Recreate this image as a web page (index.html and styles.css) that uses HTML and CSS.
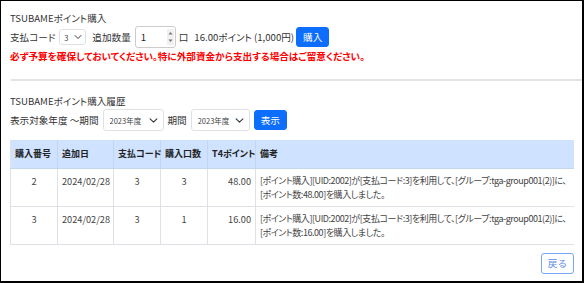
FILE: index.html
```html
<!DOCTYPE html>
<html lang="ja">
<head>
    <meta charset="UTF-8">
    <meta name="viewport" content="width=device-width, initial-scale=1.0">
    <title>TSUBAMEポイント購入</title>
    <link rel="stylesheet" href="styles.css">
</head>
<body>
    <div class="frame">
        <section class="purchase">
            <h2 class="section-title">TSUBAMEポイント購入</h2>
            <form class="form-row" id="buyForm">
                <label class="label">支払コード</label>
                <select class="select select-sm">
                    <option>3</option>
                </select>
                <label class="label label-gap">追加数量</label>
                <span class="number">
                    <input type="text" value="1">
                    <span class="spin">
                        <svg width="7" height="16" viewBox="0 0 7 16">
                            <path d="M1.5 5.5 L3.5 3 L5.5 5.5" fill="#777"/>
                            <path d="M1.5 10.5 L3.5 13 L5.5 10.5" fill="#777"/>
                        </svg>
                    </span>
                </span>
                <span class="unit">口</span>
                <span class="total">16.00ポイント (1,000円)</span>
                <button type="submit" class="btn btn-primary">購入</button>
            </form>
            <p class="note">必ず予算を確保しておいてください。特に外部資金から支出する場合はご留意ください。</p>
        </section>

        <hr class="divider">

        <section class="history">
            <h2 class="section-title">TSUBAMEポイント購入履歴</h2>
            <div class="form-row">
                <label class="label">表示対象年度 ～期間</label>
                <select class="select select-year">
                    <option>2023年度</option>
                </select>
                <label class="label">期間</label>
                <select class="select select-year2">
                    <option>2023年度</option>
                </select>
                <button type="button" class="btn btn-primary">表示</button>
            </div>

            <table class="history-table">
                <colgroup>
                    <col class="c-no">
                    <col class="c-date">
                    <col class="c-code">
                    <col class="c-qty">
                    <col class="c-pt">
                    <col>
                </colgroup>
                <thead>
                    <tr>
                        <th>購入番号</th>
                        <th>追加日</th>
                        <th>支払コード</th>
                        <th>購入口数</th>
                        <th>T4ポイント</th>
                        <th>備考</th>
                    </tr>
                </thead>
                <tbody>
                    <tr>
                        <td class="center">2</td>
                        <td>2024/02/28</td>
                        <td class="center">3</td>
                        <td class="center">3</td>
                        <td class="right">48.00</td>
                        <td class="remark">[ポイント購入][UID:2002]が[支払コード:3]を利用して、[グループ:tga-group001(2)]に、[ポイント数:48.00]を購入しました。</td>
                    </tr>
                    <tr>
                        <td class="center">3</td>
                        <td>2024/02/28</td>
                        <td class="center">3</td>
                        <td class="center">1</td>
                        <td class="right">16.00</td>
                        <td class="remark">[ポイント購入][UID:2002]が[支払コード:3]を利用して、[グループ:tga-group001(2)]に、[ポイント数:16.00]を購入しました。</td>
                    </tr>
                </tbody>
            </table>
        </section>

        <div class="actions">
            <button type="button" class="btn btn-outline">戻る</button>
        </div>
    </div>
</body>
</html>
```

FILE: styles.css
```css
* {
    margin: 0;
    padding: 0;
    box-sizing: border-box;
}
body {
    font-family: "Noto Sans CJK JP", "Noto Sans", sans-serif;
    font-feature-settings: "palt";
    font-size: 9.6px;
    color: #333;
    background: #fff;
}
.frame {
    width: 584px;
    height: 283px;
    border: 1px solid #000;
    border-right-width: 2px;
    border-bottom-width: 2px;
    padding: 10px 8px 0 9px;
    overflow: hidden;
}
.section-title {
    font-size: 9.6px;
    font-weight: normal;
    line-height: 14px;
}
.form-row {
    display: flex;
    align-items: center;
    height: 24px;
}
.label {
    margin-right: 4px;
}
.label-gap {
    margin-left: 6px;
}
.select {
    appearance: none;
    font-family: inherit;
    font-size: 7.5px;
    color: #444;
    background: #fff url("data:image/svg+xml,%3csvg xmlns='http://www.w3.org/2000/svg' viewBox='0 0 16 16'%3e%3cpath fill='none' stroke='%23343a40' stroke-linecap='round' stroke-linejoin='round' stroke-width='2' d='m2 5 6 6 6-6'/%3e%3c/svg%3e") no-repeat right 5px center / 9px 9px;
    border: 1px solid #dee2e6;
    border-radius: 3px;
    height: 22px;
    padding: 0 16px 0 6px;
}
.select-sm {
    width: 27px;
    height: 16px;
    padding-left: 4px;
    background-position: right 3px center;
    background-size: 8px 8px;
}
.select-year {
    width: 61px;
    margin-right: 4px;
}
.select-year2 {
    width: 59px;
    margin-right: 4px;
}
.number {
    display: flex;
    align-items: center;
    width: 41px;
    height: 22px;
    border: 1px solid #ccc;
    border-radius: 3px;
    padding: 0 2px 0 5px;
}
.number input {
    border: none;
    outline: none;
    width: 26px;
    font-family: inherit;
    font-size: 9.6px;
    color: #222;
}
.spin {
    display: flex;
    width: 7px;
    height: 16px;
    background: #f0f0f0;
}
.unit {
    margin: 0 6px 0 3px;
}
.total {
    margin-right: 2px;
}
.btn {
    font-family: inherit;
    font-size: 9.6px;
    border-radius: 3px;
    cursor: pointer;
    height: 20px;
    padding: 0 6px;
}
.btn-primary {
    background: #0d6efd;
    border: 1px solid #0d6efd;
    color: #fff;
}
.btn-outline {
    background: #fff;
    border: 1px solid #7aa7f5;
    color: #5a88e6;
    height: 21px;
    padding: 0 6px;
}
.note {
    color: #f00;
    font-weight: bold;
    line-height: 14px;
}
.divider {
    border: none;
    height: 2px;
    background: #e3e3e3;
    margin: 16px -10px 0 1px;
}
.history .section-title {
    margin-top: 13px;
}
.history-table {
    width: 564px;
    margin-top: 8px;
    border-collapse: collapse;
    table-layout: fixed;
    font-size: 9.2px;
    line-height: 14px;
    color: #444;
}
.history-table th {
    background: #cfe2ff;
    font-size: 9px;
    font-weight: bold;
    text-align: left;
    white-space: nowrap;
    height: 28px;
    padding: 0 4px;
    border: 1px solid #c4d5f0;
    border-top: none;
    color: #222;
}
.history-table td {
    border: 1px solid #dee2e6;
    padding: 5px 4px 4px;
    height: 37px;
    vertical-align: top;
}
.history-table td.remark {
    font-size: 9px;
    letter-spacing: -0.45px;
    padding: 5px 3px 4px 4px;
}
.history-table th:first-child,
.history-table td:first-child {
    border-left-color: #dee2e6;
}
.history-table th:last-child,
.history-table td:last-child {
    border-right: none;
}
.c-no { width: 47px; }
.c-date { width: 56px; }
.c-code { width: 47px; }
.c-qty { width: 47px; }
.c-pt { width: 48px; }
.center {
    text-align: center;
}
.right {
    text-align: right;
}
.actions {
    display: flex;
    justify-content: flex-end;
    margin-top: 8px;
}
```
